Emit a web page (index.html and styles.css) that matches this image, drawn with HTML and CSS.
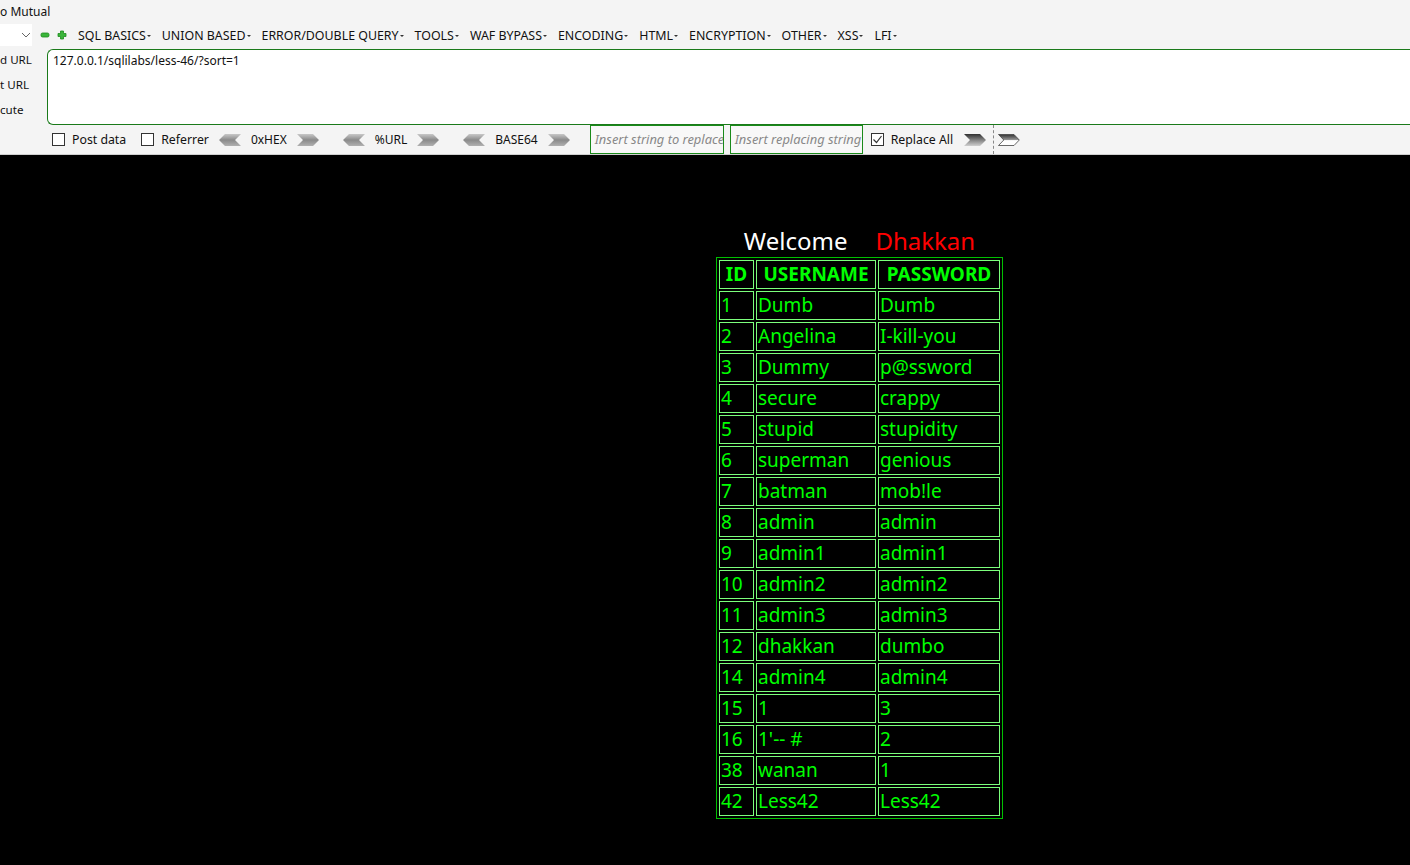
FILE: index.html
```html
<!DOCTYPE html>
<html>
<head>
<meta charset="utf-8">
<link rel="stylesheet" href="styles.css">
</head>
<body>
<div class="hackbar">
  <div class="titlerow">o Mutual</div>
  <div class="menurow">
    <div class="select"><svg width="10" height="6" viewBox="0 0 10 6"><path d="M1 1 L5 5 L9 1" fill="none" stroke="#666" stroke-width="1"/></svg></div>
    <svg class="ico" width="10" height="10" viewBox="0 0 10 10"><rect x="1" y="3" width="8" height="4" rx="1.5" fill="#3ab53a" stroke="#1d8a1d" stroke-width="0.8"/></svg>
    <svg class="ico plus" width="10" height="10" viewBox="0 0 10 10"><path d="M3.5 1 H6.5 V3.5 H9 V6.5 H6.5 V9 H3.5 V6.5 H1 V3.5 H3.5 Z" fill="#3ab53a" stroke="#1d8a1d" stroke-width="0.8"/></svg>
    <ul class="menu">
      <li>SQL BASICS<span class="caret"></span></li>
      <li>UNION BASED<span class="caret"></span></li>
      <li>ERROR/DOUBLE QUERY<span class="caret"></span></li>
      <li>TOOLS<span class="caret"></span></li>
      <li>WAF BYPASS<span class="caret"></span></li>
      <li>ENCODING<span class="caret"></span></li>
      <li>HTML<span class="caret"></span></li>
      <li>ENCRYPTION<span class="caret"></span></li>
      <li>OTHER<span class="caret"></span></li>
      <li>XSS<span class="caret"></span></li>
      <li>LFI<span class="caret"></span></li>
    </ul>
  </div>
  <div class="urlrow">
    <div class="labels">
      <span>d URL</span>
      <span>t URL</span>
      <span>cute</span>
    </div>
    <div class="urlbox">127.0.0.1/sqlilabs/less-46/?sort=1</div>
  </div>
  <div class="ctrlrow">
    <label class="chk"><span class="box"></span>Post data</label>
    <label class="chk ref"><span class="box"></span>Referrer</label>
    <div class="enc">
      <svg class="arr" width="22" height="12" viewBox="0 0 22 12"><defs><linearGradient id="g1" x1="0" y1="0" x2="0" y2="1"><stop offset="0" stop-color="#c8c8c8"/><stop offset="0.5" stop-color="#8a8a8a"/><stop offset="1" stop-color="#b0b0b0"/></linearGradient></defs><polygon points="0,6 6,0 22,0 16,6 22,12 6,12" fill="url(#g1)"/></svg>
      <span class="enclabel">0xHEX</span>
      <svg class="arr" width="22" height="12" viewBox="0 0 22 12"><polygon points="0,0 16,0 22,6 16,12 0,12 6,6" fill="url(#g1)"/></svg>
    </div>
    <div class="enc">
      <svg class="arr" width="22" height="12" viewBox="0 0 22 12"><polygon points="0,6 6,0 22,0 16,6 22,12 6,12" fill="url(#g1)"/></svg>
      <span class="enclabel">%URL</span>
      <svg class="arr" width="22" height="12" viewBox="0 0 22 12"><polygon points="0,0 16,0 22,6 16,12 0,12 6,6" fill="url(#g1)"/></svg>
    </div>
    <div class="enc">
      <svg class="arr" width="22" height="12" viewBox="0 0 22 12"><polygon points="0,6 6,0 22,0 16,6 22,12 6,12" fill="url(#g1)"/></svg>
      <span class="enclabel">BASE64</span>
      <svg class="arr" width="22" height="12" viewBox="0 0 22 12"><polygon points="0,0 16,0 22,6 16,12 0,12 6,6" fill="url(#g1)"/></svg>
    </div>
    <div class="field">Insert string to replace</div>
    <div class="field f2">Insert replacing string</div>
    <label class="chk on"><span class="box"><svg width="11" height="11" viewBox="0 0 11 11"><path d="M1.5 5.5 L4.5 8.5 L9.5 2" fill="none" stroke="#333" stroke-width="1.2"/></svg></span>Replace All</label>
    <svg class="arr go" width="22" height="12" viewBox="0 0 22 12"><defs><linearGradient id="g2" x1="0" y1="0" x2="0" y2="1"><stop offset="0" stop-color="#303030"/><stop offset="0.55" stop-color="#8a8a8a"/><stop offset="1" stop-color="#cfcfcf"/></linearGradient></defs><polygon points="0,0 16,0 22,6 16,12 0,12 6,6" fill="url(#g2)"/></svg>
    <span class="sep"></span>
    <svg class="arr" width="22" height="12" viewBox="0 0 22 12"><defs><linearGradient id="g3" x1="0" y1="0" x2="0" y2="1"><stop offset="0" stop-color="#333"/><stop offset="0.5" stop-color="#999"/><stop offset="0.55" stop-color="#fff"/><stop offset="1" stop-color="#fff"/></linearGradient></defs><polygon points="0.5,0.5 16,0.5 21.3,6 16,11.5 0.5,11.5 5.8,6" fill="url(#g3)" stroke="#444" stroke-width="0.8"/></svg>
  </div>
</div>
<div class="page">
  <div class="content">
    <div class="welcome">Welcome<span class="gap"></span><span class="name">Dhakkan</span></div>
    <table class="users">
      <tr><th>ID</th><th>USERNAME</th><th>PASSWORD</th></tr>
      <tr><td>1</td><td>Dumb</td><td>Dumb</td></tr>
      <tr><td>2</td><td>Angelina</td><td>I-kill-you</td></tr>
      <tr><td>3</td><td>Dummy</td><td>p@ssword</td></tr>
      <tr><td>4</td><td>secure</td><td>crappy</td></tr>
      <tr><td>5</td><td>stupid</td><td>stupidity</td></tr>
      <tr><td>6</td><td>superman</td><td>genious</td></tr>
      <tr><td>7</td><td>batman</td><td>mob!le</td></tr>
      <tr><td>8</td><td>admin</td><td>admin</td></tr>
      <tr><td>9</td><td>admin1</td><td>admin1</td></tr>
      <tr><td>10</td><td>admin2</td><td>admin2</td></tr>
      <tr><td>11</td><td>admin3</td><td>admin3</td></tr>
      <tr><td>12</td><td>dhakkan</td><td>dumbo</td></tr>
      <tr><td>14</td><td>admin4</td><td>admin4</td></tr>
      <tr><td>15</td><td>1</td><td>3</td></tr>
      <tr><td>16</td><td>1'-- #</td><td>2</td></tr>
      <tr><td>38</td><td>wanan</td><td>1</td></tr>
      <tr><td>42</td><td>Less42</td><td>Less42</td></tr>
    </table>
  </div>
</div>
</body>
</html>
```

FILE: styles.css
```css
html, body {
  margin: 0;
  padding: 0;
  height: 100%;
  background: #000;
}
body {
  font-family: "Noto Sans", "Open Sans", sans-serif;
  overflow: hidden;
}
.hackbar {
  background: #f4f4f4;
  border-bottom: 1px solid #cfcfcf;
  height: 154px;
  font-size: 12px;
  color: #111;
}
.titlerow {
  height: 24px;
  line-height: 24px;
  font-size: 12px;
}
.menurow {
  height: 22px;
  display: flex;
  align-items: center;
}
.select {
  width: 32px;
  height: 22px;
  background: #fff;
  display: flex;
  align-items: center;
  justify-content: flex-end;
  box-sizing: border-box;
}
.select svg { margin-right: 1px; }
.ico { margin-left: 8px; }
.plus { margin-left: 7px; }
.menu {
  list-style: none;
  margin: 0 0 0 11px;
  padding: 0;
  display: flex;
  gap: 11px;
  font-size: 12.4px;
}
.menu li {
  white-space: nowrap;
  display: flex;
  align-items: center;
}
.caret {
  display: inline-block;
  width: 0;
  height: 0;
  border-left: 2px solid transparent;
  border-right: 2px solid transparent;
  border-top: 2px solid #333;
  margin-left: 1px;
  margin-top: 2px;
}
.urlrow {
  display: flex;
  margin-top: 3px;
  height: 76px;
}
.labels {
  width: 47px;
  flex: none;
  display: flex;
  flex-direction: column;
  font-size: 11.6px;
  padding-top: 1px;
  gap: 6px;
  line-height: 19px;
}
.urlbox {
  flex: 1;
  background: #fff;
  border: 1px solid #1a7a1a;
  border-right: none;
  border-radius: 6px 0 0 6px;
  padding: 2px 5px;
  font-size: 12px;
  line-height: 18px;
}
.ctrlrow {
  display: flex;
  align-items: center;
  height: 29px;
  padding-left: 52px;
}
.chk {
  display: flex;
  align-items: center;
  font-size: 12.3px;
  white-space: nowrap;
}
.chk .box {
  width: 11px;
  height: 11px;
  border: 1px solid #333;
  background: #fff;
  margin-right: 7px;
  display: flex;
}
.chk.ref { margin-left: 15px; }
.enc {
  display: flex;
  align-items: center;
  margin-left: 10px;
}
.enc + .enc { margin-left: 24px; }
.enclabel { margin: 0 10px; font-size: 12px; }
.field {
  margin-left: 20px;
  width: 128px;
  height: 27px;
  border: 1px solid #1a8a1a;
  background: #f8f8f8;
  color: #888;
  font-style: italic;
  font-size: 12.9px;
  line-height: 27px;
  padding-left: 4px;
  overflow: hidden;
  white-space: nowrap;
  box-sizing: content-box;
}
.field.f2 { margin-left: 6px; width: 127px; }
.chk.on { margin-left: 8px; }
.arr.go { margin-left: 11px; }
.sep {
  width: 0;
  height: 29px;
  border-left: 1px dashed #888;
  margin: 0 4px 0 7px;
}
.page {
  background: #000;
}
.content {
  margin-left: 716px;
  padding-top: 71px;
  width: 287px;
  text-align: center;
}
.welcome {
  color: #fff;
  font-size: 24px;
  line-height: 30px;
  height: 30px;
}
.gap { display: inline-block; width: 28px; }
.name { color: #ff0000; }
.users {
  border: 1px solid #00c000;
  border-spacing: 2px;
  color: #00ff00;
  font-size: 19px;
  text-align: left;
  width: 287px;
  margin-top: 1px;
}
.users th, .users td {
  border: 1px solid #7cff7c;
  height: 27px;
  padding: 0 1px;
  line-height: 27px;
  white-space: nowrap;
}
.users th {
  text-align: center;
  font-weight: bold;
}
.users td:first-child, .users th:first-child { width: 31px; }
.users td:nth-child(2), .users th:nth-child(2) { width: 116px; }
```
